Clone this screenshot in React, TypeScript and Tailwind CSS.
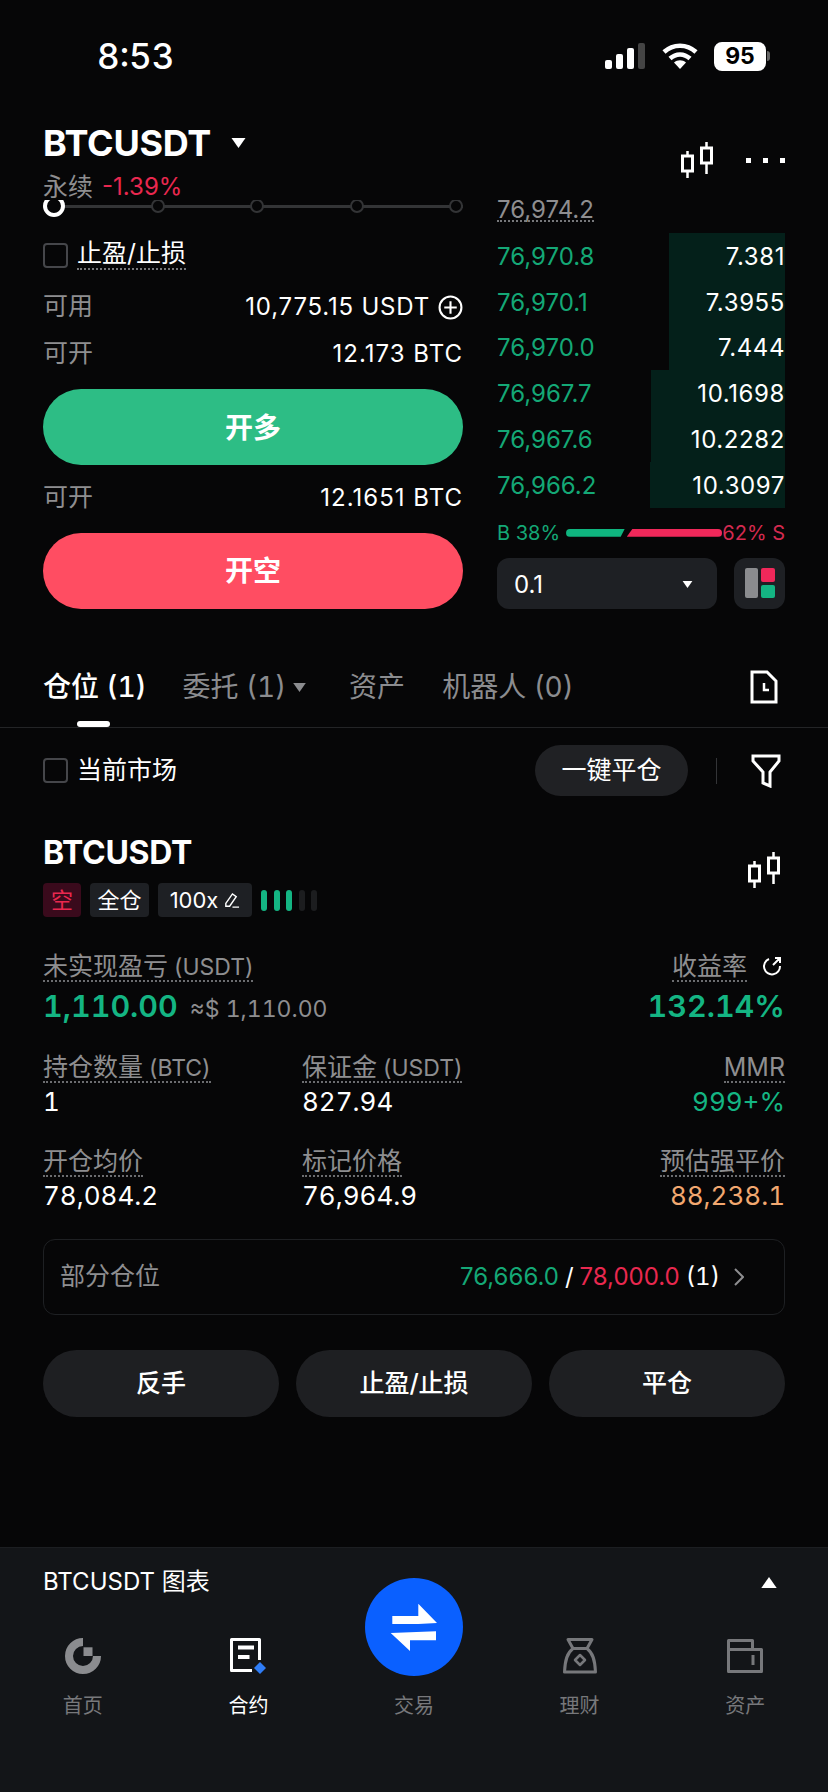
const font = "font-['Inter','Noto_Sans_CJK_SC',sans-serif]";

const Candles = ({ className = "" }: { className?: string }) => (
  <svg viewBox="0 0 32 36" fill="none" stroke="#fff" strokeWidth="2.500" className={className}>
    <path d="M6.500 9v27M25.500 0v32" />
    <rect x="1.500" y="14" width="10" height="15" fill="#060607" strokeWidth="3" />
    <rect x="20.500" y="6" width="10" height="15" fill="#060607" strokeWidth="3" />
  </svg>
);

const Caret = ({ className = "", up = false }: { className?: string; up?: boolean }) => (
  <svg viewBox="0 0 14 10" className={className} fill="currentColor">
    <path d={up ? "M7 0l7 10H0z" : "M0 0h14L7 10z"} />
  </svg>
);

const Knot = () => (
  <span className="relative block size-[14px] shrink-0 rounded-full border-2 border-[#333436] bg-[#060607]" />
);

const Check = () => (
  <span className="block size-[25px] shrink-0 rounded-[4px] border-2 border-[#45464a]" />
);

const bids = [
  { price: "76,970.8", size: "7.381", depth: 116 },
  { price: "76,970.1", size: "7.3955", depth: 116 },
  { price: "76,970.0", size: "7.444", depth: 116 },
  { price: "76,967.7", size: "10.1698", depth: 134 },
  { price: "76,967.6", size: "10.2282", depth: 134 },
  { price: "76,966.2", size: "10.3097", depth: 135 },
];

const Label = ({ children, unit }: { children: React.ReactNode; unit?: string }) => (
  <span className="inline-block h-[28px] border-b-2 border-dotted border-[#6c6d70] text-[25px] leading-[25px] text-[#8e8e90] whitespace-nowrap">
    {children}
    {unit && <span className="ml-[6px] text-[23px]">{unit}</span>}
  </span>
);

const Stat = ({
  label,
  unit,
  value,
  color = "text-white",
  right = false,
}: {
  label: string;
  unit?: string;
  value: string;
  color?: string;
  right?: boolean;
}) => (
  <div className={`flex flex-col ${right ? "items-end" : "items-start"}`}>
    <Label unit={unit}>{label}</Label>
    <span className={`mt-[3px] text-[26px] leading-[32px] tabular-nums ${color}`}>{value}</span>
  </div>
);

const tabs = [
  { icon: "home", label: "首页" },
  { icon: "contract", label: "合约", active: true },
  { icon: "", label: "交易" },
  { icon: "earn", label: "理财" },
  { icon: "wallet", label: "资产" },
];

const NavIcon = ({ name }: { name: string }) => {
  if (name === "home")
    return (
      <svg viewBox="0 0 36 36" className="size-[36px]" fill="none">
        <path d="M18 4A14 14 0 1 0 32 18" stroke="#8b8c8f" strokeWidth="8" />
        <rect x="18.500" y="9.300" width="9" height="8.700" fill="#8b8c8f" />
      </svg>
    );
  if (name === "contract")
    return (
      <svg viewBox="0 0 36 36" className="size-[36px]" fill="none">
        <path d="M29.500 22V1.500H1.500v31H22" stroke="#fff" strokeWidth="3" strokeLinejoin="round" />
        <path d="M8 7.500h16v4H8zM8 17h11.500v4H8z" fill="#fff" />
        <path d="M30 24l6 6-6 6-6-6z" fill="#2f7df6" />
      </svg>
    );
  if (name === "earn")
    return (
      <svg viewBox="0 0 34 36" className="h-[36px] w-[34px]" fill="none" stroke="#77787b" strokeWidth="3" strokeLinejoin="round">
        <path d="M5 1.500h24l-5 9H10z" />
        <path d="M10 10.500C4 15 2 22 1.500 34h31C32 22 30 15 24 10.500" />
        <path d="M17 17l5 5-5 5-5-5z" strokeWidth="2.500" />
      </svg>
    );
  return (
    <svg viewBox="0 0 36 34" className="h-[34px] w-[36px]" fill="none" stroke="#77787b" strokeWidth="3" strokeLinejoin="round">
      <path d="M1.500 32.500v-31h24v9h9v22zM1.500 10.500h24M26 16v10" />
    </svg>
  );
};

export default function App() {
  return (
    <div className={`relative flex h-[1792px] w-[828px] flex-col overflow-hidden bg-[#060607] text-white ${font}`}>
      {/* status bar */}
      <div className="flex h-[112px] shrink-0 items-center justify-between pl-[97px] pr-[58px]">
        <span className="text-[35px] font-medium leading-none tabular-nums">8:53</span>
        <div className="flex items-center">
          <svg viewBox="0 0 40 26" className="h-[26px] w-[40px]" fill="#fff">
            <rect x="0" y="17" width="7" height="9" rx="2" />
            <rect x="11" y="11" width="7" height="15" rx="2" />
            <rect x="22" y="5" width="7" height="21" rx="2" />
            <rect x="33" y="0" width="7" height="26" rx="2" fill="#444" />
          </svg>
          <svg viewBox="0 0 36 26" className="ml-[17px] h-[26px] w-[36px]" fill="none" stroke="#fff" strokeWidth="4.500">
            <path d="M2 9c9-8.500 23-8.500 32 0M8 15.500c6-5.500 14-5.500 20 0" />
            <path d="M18 26l-6-6.500c3.500-3 8.500-3 12 0z" fill="#fff" stroke="none" />
          </svg>
          <span className="ml-[16px] flex h-[29px] w-[52px] items-center justify-center rounded-[8px] bg-white text-[23px] font-bold leading-none text-black">
            95
          </span>
          <span className="ml-[1px] h-[10px] w-[3px] rounded-r-full bg-[#666]" />
        </div>
      </div>

      {/* market header */}
      <div className="flex h-[88px] shrink-0 justify-between px-[43px]">
        <div className="flex flex-col">
          <div className="flex h-[62px] items-center">
            <span className="text-[36px] font-bold leading-none tracking-[-0.3px]">BTCUSDT</span>
            <Caret className="ml-[20px] h-[10px] w-[15px] text-white" />
          </div>
          <div className="flex h-[26px] items-center text-[25px] leading-none">
            <span className="text-[#8e8e90]">永续</span>
            <span className="ml-[9px] text-[24px] text-[#e9284f]">-1.39%</span>
          </div>
        </div>
        <div className="flex items-center pt-[8px]">
          <Candles className="h-[36px] w-[32px]" />
          <div className="ml-[33px] flex gap-[12px]">
            <span className="size-[5px] bg-white" />
            <span className="size-[5px] bg-white" />
            <span className="size-[5px] bg-white" />
          </div>
        </div>
      </div>

      {/* order form and book */}
      <div className="flex h-[409px] shrink-0 overflow-hidden px-[43px]">
        <div className="flex w-[420px] flex-col">
          <div className="relative -mt-[6px] flex h-[24px] shrink-0 items-center justify-between">
            <span className="absolute inset-x-0 top-[11px] h-[3px] bg-[#333436]" />
            <span className="relative size-[22px] rounded-full border-[4px] border-white bg-[#060607]" />
            <Knot />
            <Knot />
            <Knot />
            <Knot />
          </div>
          <div className="mt-[24px] flex h-[26px] shrink-0 items-center">
            <Check />
            <span className="ml-[9px] h-[30px] border-b-2 border-dotted border-[#77787b] text-[25px] leading-[26px]">止盈/止损</span>
          </div>
          <div className="mt-[26px] flex h-[26px] shrink-0 items-center justify-between text-[24px]">
            <span className="text-[25px] text-[#8e8e90]">可用</span>
            <span className="flex items-center tracking-[0.8px]">
              10,775.15 USDT
              <svg viewBox="0 0 24 24" fill="none" stroke="#fff" strokeWidth="2" className="ml-[8px] size-[25px]">
                <circle cx="12" cy="12" r="10.500" />
                <path d="M12 6v12M6 12h12" />
              </svg>
            </span>
          </div>
          <div className="mt-[21px] flex h-[26px] shrink-0 items-center justify-between text-[24px]">
            <span className="text-[25px] text-[#8e8e90]">可开</span>
            <span className="tracking-[1px]">12.173 BTC</span>
          </div>
          <button className="mt-[22px] flex h-[76px] shrink-0 items-center justify-center rounded-full bg-[#2dbd85] pt-[1px] text-[28px] font-semibold">开多</button>
          <div className="mt-[19px] flex h-[26px] shrink-0 items-center justify-between pt-[1px] text-[24px]">
            <span className="text-[25px] text-[#8e8e90]">可开</span>
            <span className="tracking-[1px]">12.1651 BTC</span>
          </div>
          <button className="mt-[23px] flex h-[76px] shrink-0 items-center justify-center rounded-full bg-[#ff4d62] text-[28px] font-semibold">开空</button>
        </div>

        <div className="ml-[34px] flex w-[288px] flex-col">
          <div className="flex h-[33px] shrink-0 items-start">
            <span className="h-[22px] border-b-2 border-dotted border-[#77787b] text-[24px] leading-[20px] text-[#8e8e90]">76,974.2</span>
          </div>
          {bids.map((b) => (
            <div key={b.price} className="relative flex h-[45.8px] shrink-0 items-center justify-between pt-[2px] text-[24px]">
              <span
                className="absolute inset-y-0 right-0 bg-[#04201a]"
                style={{ width: b.depth }}
              />
              <span className="relative text-[#14a876]">{b.price}</span>
              <span className="relative tracking-[0.6px]">{b.size}</span>
            </div>
          ))}
          <div className="mt-[15px] flex h-[20px] shrink-0 items-center whitespace-nowrap text-[20px] leading-none">
            <span className="text-[#14a876]">B 38%</span>
            <span className="ml-[6px] h-[8px] w-[59px] rounded-l-full bg-[#0fb57f] [clip-path:polygon(0_0,100%_0,93%_100%,0_100%)]" />
            <span className="ml-[2px] h-[8px] w-[96px] rounded-r-full bg-[#f0285a] [clip-path:polygon(6%_0,100%_0,100%_100%,0_100%)]" />
            <span className="ml-auto text-[#d42a50]">62% S</span>
          </div>
          <div className="mt-[15px] flex h-[51px] shrink-0 justify-between">
            <div className="flex w-[220px] items-center justify-between rounded-[12px] bg-[#1e2024] pl-[17px] pr-[24px] pt-[3px] text-[24px]">
              0.1
              <Caret className="h-[7px] w-[11px] text-white" />
            </div>
            <div className="flex w-[51px] items-center justify-center gap-[3px] rounded-[12px] bg-[#1e2024]">
              <span className="h-[30px] w-[13px] rounded-[2px] bg-[#8b8c8f]" />
              <span className="flex flex-col gap-[3px]">
                <span className="h-[14px] w-[14px] rounded-[2px] bg-[#f0285a]" />
                <span className="h-[13px] w-[14px] rounded-[2px] bg-[#14b583]" />
              </span>
            </div>
          </div>
        </div>
      </div>

      {/* tabs */}
      <div className="relative flex h-[119px] shrink-0 items-start border-b border-[#232426] px-[43px] pt-[62px]">
        <div className="flex h-[32px] items-center whitespace-nowrap text-[28px] leading-none tabular-nums text-[#8b8c8f]">
          <span className="font-medium text-white">仓位 (1)</span>
          <span className="ml-[36px]">委托 (1)</span>
          <Caret className="ml-[7px] h-[9px] w-[13px] text-[#8b8c8f]" />
          <span className="ml-[43px]">资产</span>
          <span className="ml-[37px]">机器人 (0)</span>
        </div>
        <span className="absolute bottom-0 left-[77px] h-[6px] w-[33px] rounded-full bg-white" />
        <svg viewBox="0 0 28 34" fill="none" stroke="#fff" strokeWidth="3" className="ml-auto -mt-[1px] mr-[7px] h-[34px] w-[28px]">
          <path d="M2 2h15l9 9v21H2z" />
          <path d="M14 13v7h5" strokeWidth="2.500" />
        </svg>
      </div>

      {/* filter row */}
      <div className="mt-[17px] flex h-[51px] shrink-0 items-center pl-[43px] pr-[47px]">
        <Check />
        <span className="ml-[9px] text-[25px]">当前市场</span>
        <button className="ml-auto flex h-[51px] w-[153px] items-center justify-center rounded-full bg-[#202124] text-[25px]">一键平仓</button>
        <span className="ml-[28px] h-[26px] w-px bg-[#333437]" />
        <svg viewBox="0 0 30 34" fill="none" stroke="#fff" strokeWidth="3" className="ml-[34px] h-[34px] w-[30px]">
          <path d="M2 2h26v5l-9 11v14l-7-3V18L2 7z" />
        </svg>
      </div>

      {/* position card */}
      <div className="mt-[41px] flex shrink-0 items-center justify-between pl-[43px] pr-[48px]">
        <div className="flex flex-col">
          <span className="h-[32px] text-[32px] font-bold leading-[32px] tracking-[-0.3px]">BTCUSDT</span>
          <div className="mt-[14px] flex h-[34px] items-center gap-[9px] text-[22px] leading-none">
            <span className="flex h-full w-[38px] items-center justify-center rounded-[4px] bg-[#3a0a1c] text-[#e9284f]">空</span>
            <span className="flex h-full w-[59px] items-center justify-center rounded-[4px] bg-[#1e2024]">全仓</span>
            <span className="flex h-full w-[94px] items-center justify-center rounded-[4px] bg-[#1e2024]">
              100x
              <svg viewBox="0 0 18 18" fill="none" stroke="#fff" strokeWidth="1.500" className="ml-[5px] size-[17px]">
                <path d="M3 12L10 2l4 3-7 10H3zM10 16h7" />
              </svg>
            </span>
            <span className="flex gap-[6.500px]">
              <span className="h-[21px] w-[6px] rounded-full bg-[#14b583]" />
              <span className="h-[21px] w-[6px] rounded-full bg-[#14b583]" />
              <span className="h-[21px] w-[6px] rounded-full bg-[#14b583]" />
              <span className="h-[21px] w-[6px] rounded-full bg-[#1c1d1f]" />
              <span className="h-[21px] w-[6px] rounded-full bg-[#1c1d1f]" />
            </span>
          </div>
        </div>
        <Candles className="mb-[14px] h-[36px] w-[32px]" />
      </div>

      <div className="mt-[37px] flex shrink-0 justify-between px-[43px]">
        <div className="flex flex-col items-start">
          <Label unit="(USDT)">未实现盈亏</Label>
          <div className="mt-[6px] flex h-[36px] items-baseline tabular-nums">
            <span className="text-[30.500px] font-semibold leading-[36px] text-[#14b583]">1,110.00</span>
            <span className="ml-[12px] text-[23px] text-[#8e8e90]">≈$ 1,110.00</span>
          </div>
        </div>
        <div className="flex flex-col items-end">
          <div className="flex items-start">
            <Label>收益率</Label>
            <svg viewBox="0 0 22 22" fill="none" stroke="#fff" strokeWidth="2" className="ml-[13px] mr-[3px] mt-[2px] size-[22px]">
              <path d="M9 3a8 8 0 1 0 11 7M13 9l7-7M15 2h5v5" />
            </svg>
          </div>
          <span className="mt-[6px] h-[36px] text-[30.500px] font-semibold leading-[36px] tabular-nums text-[#14b583]">132.14%</span>
        </div>
      </div>

      <div className="mt-[31px] grid shrink-0 grid-cols-[259px_1fr_auto] gap-y-[31px] px-[43px]">
        <Stat label="持仓数量" unit="(BTC)" value="1" />
        <Stat label="保证金" unit="(USDT)" value="827.94" />
        <Stat label="MMR" value="999+%" color="text-[#14b583]" right />
        <Stat label="开仓均价" value="78,084.2" />
        <Stat label="标记价格" value="76,964.9" />
        <Stat label="预估强平价" value="88,238.1" color="text-[#f2a870]" right />
      </div>

      <div className="mx-[43px] mt-[27px] flex h-[76px] shrink-0 items-center rounded-[12px] border border-[#1e2023] pl-[16px] pr-[40px] text-[24px]">
        <span className="text-[25px] text-[#8e8e90]">部分仓位</span>
        <span className="ml-auto text-[#14a876]">76,666.0</span>
        <span className="ml-[6px]">/</span>
        <span className="ml-[6px] text-[#e9284f]">78,000.0</span>
        <span className="ml-[6px] tabular-nums">(1)</span>
        <svg viewBox="0 0 10 18" fill="none" stroke="#8e8e90" strokeWidth="2" className="ml-[14px] h-[18px] w-[10px]">
          <path d="M1 1l8 8-8 8" />
        </svg>
      </div>

      <div className="mt-[35px] flex shrink-0 gap-[17px] px-[43px]">
        {["反手", "止盈/止损", "平仓"].map((t) => (
          <button key={t} className="flex h-[67px] flex-1 items-center justify-center rounded-full bg-[#1e1f22] pt-[1px] text-[25px] font-medium">{t}</button>
        ))}
      </div>

      {/* bottom bar */}
      <div className="relative mt-auto flex h-[245px] shrink-0 flex-col border-t border-[#1c1e21] bg-[#131518]">
        <div className="mt-[21px] flex h-[26px] shrink-0 items-center justify-between pl-[43px] pr-[51px] text-[24px] leading-none">
          <span>BTCUSDT 图表</span>
          <Caret up className="h-[11px] w-[16px] text-white" />
        </div>
        <div className="mt-[42px] grid grid-cols-5">
          {tabs.map((t) => (
            <div key={t.label} className="flex flex-col items-center">
              <span className="flex h-[38px] items-center justify-center">
                {t.icon && <NavIcon name={t.icon} />}
              </span>
              <span className={`mt-[18px] text-[20px] leading-[26px] ${t.active ? "text-white" : "text-[#77787b]"}`}>{t.label}</span>
            </div>
          ))}
        </div>
        <span className="absolute left-[365px] top-[30px] flex size-[98px] items-center justify-center rounded-full bg-[#0a60ff]">
          <svg viewBox="0 0 48 48" fill="#fff" className="size-[48px]">
            <path d="M2.300 13h26V.7L47 20l-18.700 1h-26zM46 28.300v9H20V48L.7 30z" />
          </svg>
        </span>
      </div>
    </div>
  );
}
